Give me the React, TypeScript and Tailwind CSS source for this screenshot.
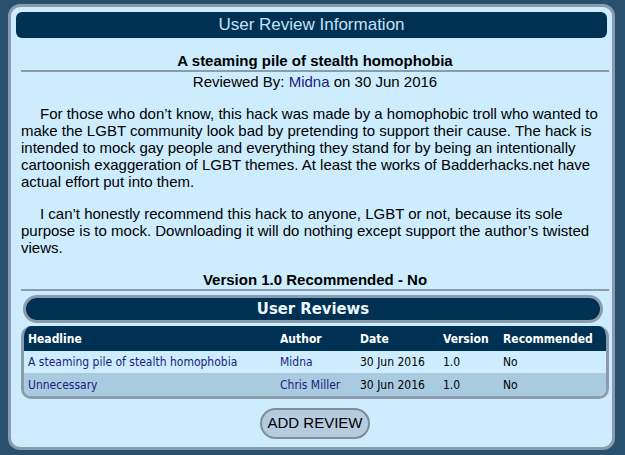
import React from "react";

const rows = [
  { headline: "A steaming pile of stealth homophobia", author: "Midna", date: "30 Jun 2016", version: "1.0", rec: "No" },
  { headline: "Unnecessary", author: "Chris Miller", date: "30 Jun 2016", version: "1.0", rec: "No" },
];

const App = () => {
  return (
    <div className="w-[625px] h-[455px] bg-[#29506f] pt-[4px] px-[8px] font-['Liberation_Sans',Arial,sans-serif]">
      <div className="w-[607px] h-[446px] bg-[#cdedff] border-[3px] border-[#8a9cab] rounded-[12px] px-[5px] pt-[5px]">
        <div className="h-[26px] bg-[#003153] rounded-[6px] flex items-center justify-center text-[17px] text-[#c4e2f6]">
          User Review Information
        </div>

        <div className="px-[5px]">
          <div className="-mr-[7px] mt-[14px] text-center text-[15px] font-bold text-black leading-[17px] border-b-2 border-[#8a9cab] pb-[1px]">
            A steaming pile of stealth homophobia
          </div>
          <div className="-mr-[7px] text-center text-[15px] text-black leading-[17px] mt-[1px]">
            Reviewed By: <span className="text-[#1b1a80]">Midna</span> on 30 Jun 2016
          </div>

          <div className="mt-[15px] text-[15px] leading-[17px] text-black">
            <p className="indent-[19px]">
              For those who don’t know, this hack was made by a homophobic troll who wanted to make the LGBT community look bad by pretending to support their cause. The hack is intended to mock gay people and everything they stand for by being an intentionally cartoonish exaggeration of LGBT themes. At least the works of Badderhacks.net have actual effort put into them.
            </p>
            <p className="indent-[19px] mt-[15px]">
              I can’t honestly recommend this hack to anyone, LGBT or not, because its sole purpose is to mock. Downloading it will do nothing except support the author’s twisted views.
            </p>
          </div>

          <div className="-mr-[7px] mt-[15px] text-center text-[15px] font-bold text-black leading-[17px] border-b-2 border-[#8a9cab] pb-[1px]">
            Version 1.0 Recommended - No
          </div>

          <div className="ml-[2px] -mr-[1px] mt-[4px] h-[28px] bg-[#003153] border-[3px] border-[#8a9cab] rounded-full flex items-center justify-center text-[16.5px] font-bold text-[#eef7ff] font-['DejaVu_Sans_Condensed',sans-serif]">
            User Reviews
          </div>

          <div className="-mr-[7px] mt-[3px] border-[3px] border-t-0 border-[#8a9cab] rounded-[10px] overflow-hidden font-['DejaVu_Sans_Condensed',sans-serif] text-[12px]">
            <div className="h-[25px] bg-[#003153] grid grid-cols-[252px_80px_83px_60px_1fr] items-center px-[4px] font-bold text-white">
              <div>Headline</div>
              <div>Author</div>
              <div>Date</div>
              <div>Version</div>
              <div>Recommended</div>
            </div>
            {rows.map((r, i) => (
              <div
                key={i}
                className={
                  i === 0
                    ? "h-[23px] bg-[#cdedff] grid grid-cols-[252px_80px_83px_60px_1fr] items-center px-[4px] border-b border-[#b0c8d8]"
                    : "h-[22px] bg-[#a9cbe0] grid grid-cols-[252px_80px_83px_60px_1fr] items-center px-[4px]"
                }
              >
                <div className="text-[#1b1a80]">{r.headline}</div>
                <div className="text-[#1b1a80]">{r.author}</div>
                <div className="text-black">{r.date}</div>
                <div className="text-black">{r.version}</div>
                <div className="text-black">{r.rec}</div>
              </div>
            ))}
          </div>

          <div className="-mr-[7px] flex justify-center mt-[9px]">
            <button className="h-[31px] px-[5px] bg-[#b5cbde] border-2 border-[#7d8d9c] rounded-full text-[15px] text-black">
              ADD REVIEW
            </button>
          </div>
        </div>
      </div>
    </div>
  );
};

export default App;
